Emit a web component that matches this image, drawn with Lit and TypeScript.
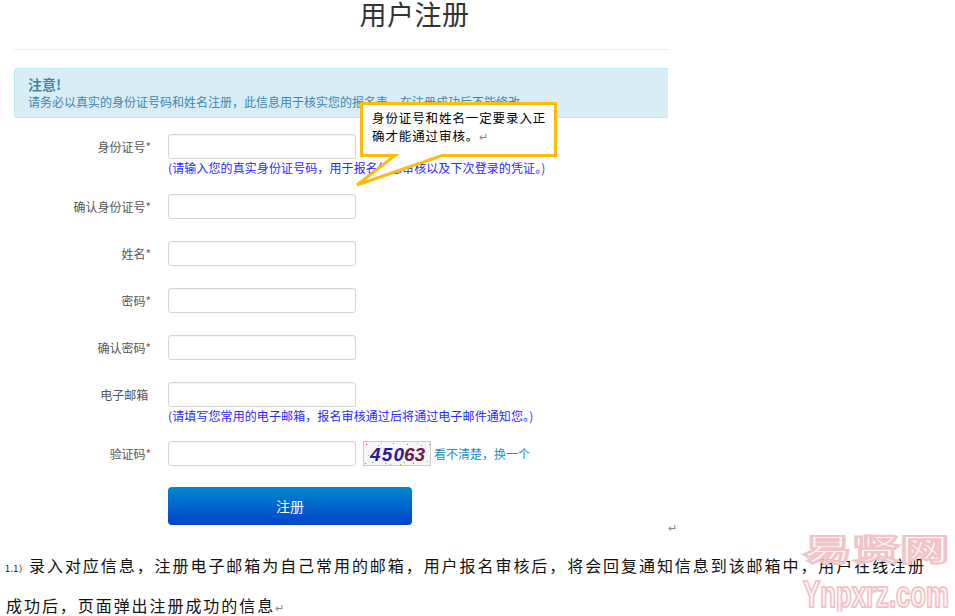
import { LitElement, html, css, svg, unsafeCSS } from "lit";
import { customElement } from "lit/decorators.js";

const CJK = unsafeCSS(`"Noto Sans CJK SC", "Liberation Sans", sans-serif`);

type Row = { label: string; star: boolean; help?: string; tight?: boolean };

const rows: Row[] = [
  { label: "身份证号", star: true, help: "(请输入您的真实身份证号码，用于报名信息审核以及下次登录的凭证。)" },
  { label: "确认身份证号", star: true },
  { label: "姓名", star: true },
  { label: "密码", star: true },
  { label: "确认密码", star: true },
  { label: "电子邮箱", star: false, help: "(请填写您常用的电子邮箱，报名审核通过后将通过电子邮件通知您。)", tight: true },
];

const dots: [number, number, string][] = [
  [3, 3, "#c33"], [9, 21, "#39c"], [15, 4, "#9a3"], [22, 22, "#c6c"], [30, 2, "#888"], [37, 23, "#c93"],
  [44, 3, "#39c"], [50, 22, "#c33"], [58, 4, "#6a6"], [64, 20, "#99c"], [5, 14, "#c9c"], [62, 11, "#bbb"],
  [2, 22, "#a66"], [18, 2, "#aac"], [41, 21, "#8a8"], [54, 2, "#caa"], [66, 3, "#77a"], [27, 23, "#aa7"],
];

@customElement("app-root")
export class AppRoot extends LitElement {
  static styles = css`
    :host {
      display: block;
      position: relative;
      width: 955px;
      height: 616px;
      overflow: hidden;
      background: #fff;
      font-family: ${CJK};
    }
    .page { width: 654px; margin-left: 14px; overflow: hidden; }
    h1 {
      margin: 0;
      height: 49px;
      padding-left: 147px;
      border-bottom: 1px solid #eee;
      text-align: center;
      font-size: 27px;
      line-height: 28px;
      font-weight: 400;
      letter-spacing: 0.5px;
      color: #333;
    }
    .alert {
      margin-top: 18px;
      height: 50px;
      box-sizing: border-box;
      padding: 6px 13px;
      background: #d9edf7;
      border: 1px solid #bce8f1;
      border-right: none;
      border-radius: 4px 0 0 4px;
      color: #3a87ad;
      font-size: 12px;
      line-height: 16px;
      white-space: nowrap;
    }
    .alert strong { display: block; font-size: 14px; line-height: 19px; }
    form { display: flex; flex-direction: column; gap: 22px; margin-top: 16px; }
    .row { display: grid; grid-template-columns: 137px 1fr; column-gap: 17px; }
    .label {
      height: 25px;
      line-height: 25px;
      font-size: 12px;
      color: #555;
      text-align: right;
      white-space: nowrap;
    }
    .star { color: #955; }
    .field { display: flex; align-items: flex-start; }
    input {
      display: block;
      width: 188px;
      height: 25px;
      box-sizing: border-box;
      margin: 0;
      padding: 0;
      background: #fff;
      border: 1px solid #d4d4d4;
      border-radius: 3px;
      box-shadow: inset 0 1px 1px rgba(0, 0, 0, 0.05);
    }
    .help {
      height: 13px;
      padding-top: 1px;
      font-size: 12px;
      line-height: 16px;
      color: #2a2aff;
      white-space: nowrap;
      letter-spacing: 0.1px;
      box-sizing: border-box;
    }
    .help.tight { height: 12px; }
    .captcha { display: block; width: 68px; height: 25px; margin-left: 7px; }
    .captcha text { font: italic 700 19px "Liberation Sans", sans-serif; }
    .change {
      margin-left: 3px;
      font-size: 12px;
      line-height: 25px;
      color: #1e8fc8;
      white-space: nowrap;
    }
    .actions { margin: -1px 0 0 154px; }
    button {
      display: block;
      width: 244px;
      height: 38px;
      padding: 0;
      border: none;
      border-radius: 4px;
      background: linear-gradient(#0088cc, #0044cc);
      color: #fff;
      font: 14px ${CJK};
    }
    .pilcrow { color: #888; font-size: 11px; letter-spacing: 0; }
    .end-mark { height: 0; margin-left: 668px; line-height: 0; }
    .doc {
      margin: 22px 0 0 6px;
      font-size: 16px;
      line-height: 37px;
      letter-spacing: 1.94px;
      color: #111;
      white-space: nowrap;
    }
    .num { font-size: 9px; letter-spacing: 0.4px; display: inline-block; width: 24px; margin-left: -1px; }
    .callout { position: absolute; left: 354px; top: 100px; width: 206px; height: 90px; }
    .callout svg { position: absolute; inset: 0; }
    .callout p {
      position: absolute;
      left: 18px;
      top: 9px;
      margin: 0;
      font-size: 12.5px;
      line-height: 18px;
      letter-spacing: 0.9px;
      color: #000;
      white-space: nowrap;
    }
    .watermark {
      position: absolute;
      left: 800px;
      top: 528px;
      width: 152px;
      height: 84px;
      pointer-events: none;
    }
    .watermark text {
      fill: rgba(255, 250, 250, 0.72);
      stroke: #f2c3c8;
      stroke-width: 2.2px;
    }
    .wm-cn { font: 700 30px ${CJK}; }
    .wm-en { font: 700 36px "Liberation Sans", sans-serif; }
  `;

  private renderCaptcha() {
    return html`<svg class="captcha" viewBox="0 0 68 25" role="img" aria-label="captcha">
      <rect x="0.5" y="0.5" width="67" height="24" fill="#f6f6f2" stroke="#c9c9c9"></rect>
      ${dots.map(([x, y, c]) => svg`<rect x=${x} y=${y} width="1" height="1" fill=${c}></rect>`)}
      <text x="7" y="19.5" fill="#2a1aa0" textLength="34">450</text>
      <text x="41" y="19.5" fill="#6d1a4e" textLength="21">63</text>
    </svg>`;
  }

  render() {
    return html`
      <div class="page">
        <h1>用户注册</h1>
        <div class="alert">
          <strong>注意!</strong>
          请务必以真实的身份证号码和姓名注册，此信息用于核实您的报名表，在注册成功后不能修改。
        </div>
        <form>
          ${rows.map(
            (r) => html`<div class="row">
              <div class="label">${r.label}${r.star ? html`<span class="star">*</span>` : html`&nbsp;`}</div>
              <div>
                <input type="text" />
                ${r.help ? html`<div class="help ${r.tight ? "tight" : ""}">${r.help}</div>` : ""}
              </div>
            </div>`
          )}
          <div class="row">
            <div class="label">验证码<span class="star">*</span></div>
            <div class="field">
              <input type="text" />
              ${this.renderCaptcha()}
              <span class="change">看不清楚，换一个</span>
            </div>
          </div>
          <div class="actions"><button type="button">注册</button></div>
        </form>
      </div>
      <div class="end-mark"><span class="pilcrow">↵</span></div>
      <div class="doc">
        <span class="num">1.1）</span>录入对应信息，注册电子邮箱为自己常用的邮箱，用户报名审核后，将会回复通知信息到该邮箱中，用户在线注册<br />
        成功后，页面弹出注册成功的信息<span class="pilcrow">↵</span>
      </div>
      <div class="callout">
        <svg viewBox="0 0 206 90" width="206" height="90">
          <path
            d="M7.5 3.5H201.5V55.5H88L3 85L41 55.5H7.5Z"
            fill="#fff"
            stroke="#fcbc0e"
            stroke-width="3"
          ></path>
        </svg>
        <p>身份证号和姓名一定要录入正<br />确才能通过审核。<span class="pilcrow">↵</span></p>
      </div>
      <svg class="watermark" viewBox="0 0 152 84">
        <text class="wm-cn" x="3" y="32" textLength="146" lengthAdjust="spacingAndGlyphs">易贤网</text>
        <text class="wm-en" x="3" y="79" textLength="146" lengthAdjust="spacingAndGlyphs">Ynpxrz.com</text>
      </svg>
    `;
  }
}
